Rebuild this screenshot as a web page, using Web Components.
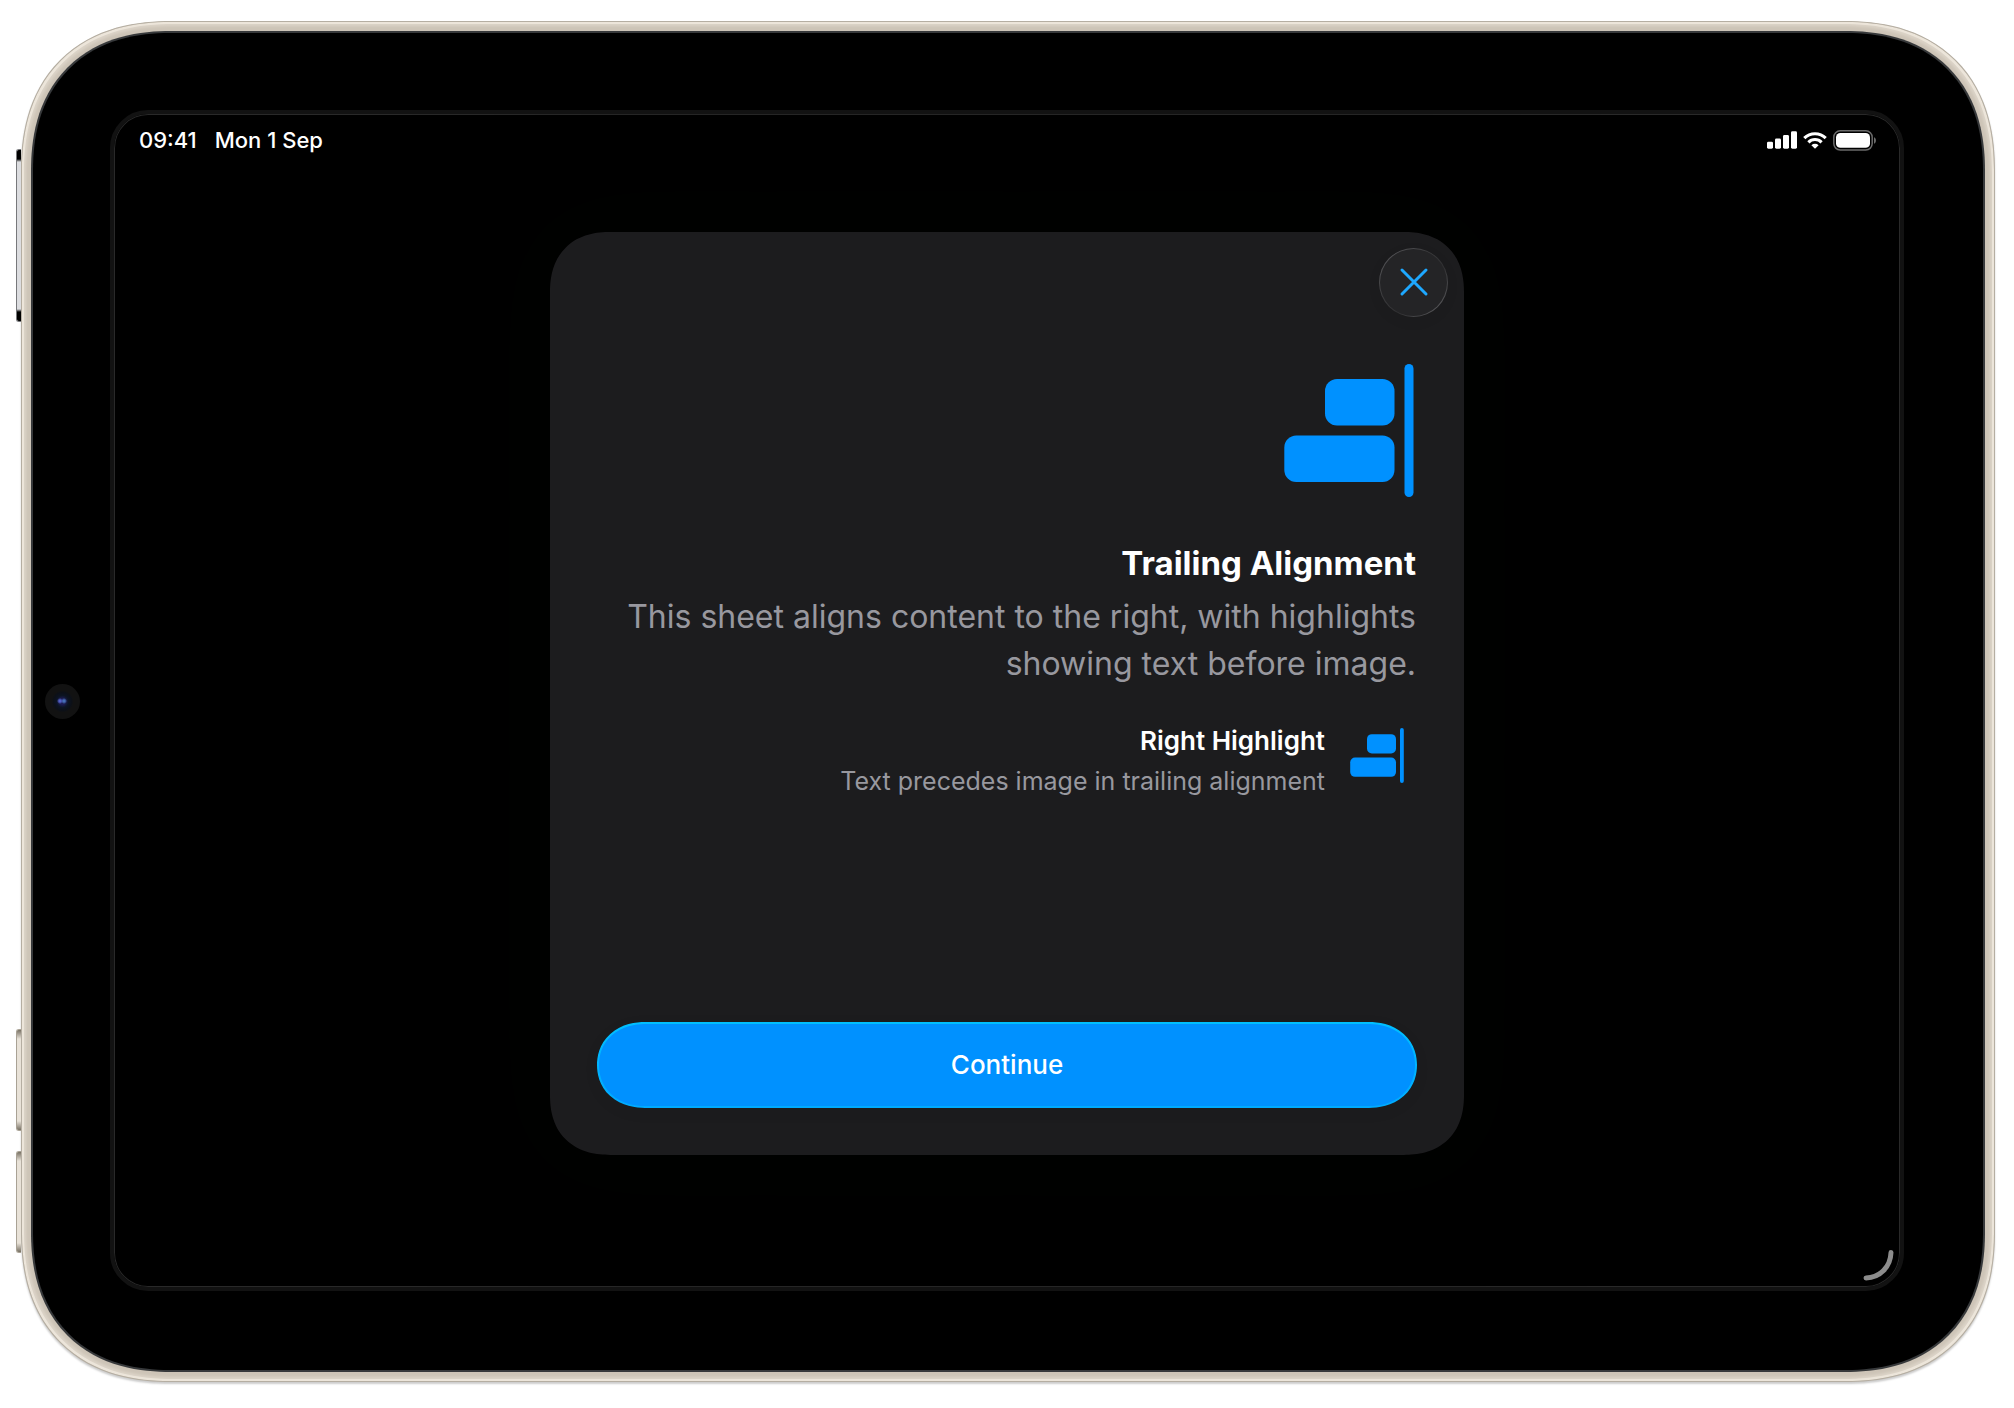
<!DOCTYPE html>
<html lang="en-GB">
<head>
<meta charset="utf-8">
<meta name="viewport" content="width=device-width, initial-scale=1">
<title>Trailing Alignment</title>
<style>
  *, *::before, *::after { box-sizing: border-box; }
  body {
    margin: 0;
    min-height: 100vh;
    display: flex;
    padding: 21px 19px 26px 21px;
    background: #fff;
    color: #fff;
    font-family: Inter, "Liberation Sans", sans-serif;
  }
</style>
</head>
<body>
<tablet-frame>
  <status-bar slot="status" time="09:41" date="Mon 1 Sep"></status-bar>
  <onboarding-sheet>
    <trailing-icon slot="image"></trailing-icon>
    <span slot="title">Trailing Alignment</span>
    <span slot="subtitle">This sheet aligns content to the right, with highlights showing text before image.</span>
    <highlight-row slot="highlights">
      <span slot="title">Right Highlight</span>
      <span slot="detail">Text precedes image in trailing alignment</span>
      <trailing-icon slot="image" small></trailing-icon>
    </highlight-row>
    <span slot="action">Continue</span>
  </onboarding-sheet>
</tablet-frame>

<script>
function define(name, html) {
  const template = document.createElement('template');
  template.innerHTML = '<style>*,*::before,*::after{box-sizing:border-box}:host{box-sizing:border-box}</style>' + html;
  customElements.define(name, class extends HTMLElement {
    connectedCallback() {
      if (this.shadowRoot) return;
      this.attachShadow({ mode: 'open' }).append(template.content.cloneNode(true));
      this.shadowRoot.querySelectorAll('[data-attr]').forEach(el => {
        el.textContent = this.getAttribute(el.dataset.attr);
      });
    }
  });
}

define('trailing-icon', `
  <style>
    :host { display: block; width: 130px; color: #0091ff; }
    :host([small]) { width: 54px; }
    svg { display: block; width: 100%; height: auto; fill: currentColor; }
    .small, :host([small]) .large { display: none; }
    :host([small]) .small { display: block; }
  </style>
  <svg class="large" viewBox="0 0 130 133" aria-hidden="true">
    <rect x="41" y="15" width="69.5" height="46.5" rx="12"/>
    <rect x="0.3" y="71.5" width="110.2" height="46.5" rx="12"/>
    <rect x="120.5" y="0" width="9" height="133" rx="4.5"/>
  </svg>
  <svg class="small" viewBox="0 0 54 55" aria-hidden="true">
    <rect x="17" y="6.2" width="29" height="19.3" rx="4.8"/>
    <rect x="0.2" y="29.5" width="45.8" height="19.3" rx="4.8"/>
    <rect x="50" y="0" width="3.8" height="55" rx="1.9"/>
  </svg>
`);

define('status-bar', `
  <style>
    :host {
      display: flex; align-items: center; justify-content: space-between;
      height: 52px; padding: 0 23px 0 25px;
      font-size: 22px; line-height: 28px; font-weight: 500;
    }
    .group { display: flex; align-items: center; }
    .clock { gap: 18px; }
    .icons { gap: 6px; }
    svg { display: block; }
  </style>
  <div class="group clock"><span data-attr="time"></span><span data-attr="date"></span></div>
  <div class="group icons">
    <svg width="30" height="18" viewBox="0 0 30 18" fill="#fff" aria-label="Signal">
      <rect x="0" y="10.7" width="6" height="7" rx="1.4"/>
      <rect x="8" y="7.6" width="6" height="10.1" rx="1.4"/>
      <rect x="16" y="4" width="6" height="13.7" rx="1.4"/>
      <rect x="24" y="0.3" width="6" height="17.4" rx="1.4"/>
    </svg>
    <svg width="24" height="18" viewBox="0 0 24 18" fill="none" stroke="#fff" stroke-width="3.1" aria-label="Wi-Fi">
      <path d="M1.3 7.2a15 15 0 0 1 21.4 0"/>
      <path d="M5.4 11.3a9.3 9.3 0 0 1 13.2 0"/>
      <path d="M8.4 14.2a5.2 5.2 0 0 1 7.2 0L12 17.8z" fill="#fff" stroke="none"/>
    </svg>
    <svg width="44" height="21" viewBox="0 0 44 21" aria-label="Battery">
      <rect x="0.8" y="0.8" width="38.4" height="19.2" rx="6.4" fill="none" stroke="#6b6b6b" stroke-width="1.5"/>
      <rect x="3" y="3" width="34" height="14.8" rx="4.4" fill="#fff"/>
      <path d="M41 7.2c2.6 1.1 2.6 5.4 0 6.5z" fill="#6b6b6b"/>
    </svg>
  </div>
`);

define('highlight-row', `
  <style>
    :host { display: flex; justify-content: flex-end; gap: 25px; padding-right: 12px; text-align: right; line-height: 32px; }
    .text { display: flex; flex-direction: column; gap: 8px; }
    h2, p { margin: 0; font-size: 26px; }
    h2 { font-weight: 600; }
    p { font-size: 25px; color: #98989f; }
    .image { padding-top: 3px; }
  </style>
  <div class="text">
    <h2><slot name="title"></slot></h2>
    <p><slot name="detail"></slot></p>
  </div>
  <div class="image"><slot name="image"></slot></div>
`);

define('onboarding-sheet', `
  <style>
    :host {
      display: flex; flex-direction: column;
      width: 100%; max-width: 914px; min-height: 923px;
      padding: 16px 0 47px;
      border-radius: 52px;
      background: #1c1c1e;
      box-shadow: 0 0 120px 40px #000200;
    }
    header { display: flex; justify-content: flex-end; padding: 0 16px; }
    button { font: inherit; color: inherit; border: 0; cursor: pointer; }
    .close {
      display: grid; place-items: center; width: 69px; height: 69px; padding: 0;
      border: 1px solid transparent; border-radius: 50%;
      background:
        linear-gradient(#242426, #242426) padding-box,
        linear-gradient(135deg, #5a5a5d 5%, #3a3a3c 40%, #303032 60%, #606063 95%) border-box;
      box-shadow: 0 4px 14px rgba(0, 0, 0, .06);
    }
    svg { display: block; }
    .content { flex: 1; display: flex; flex-direction: column; padding: 0 48px 0 47px; text-align: right; }
    .image { align-self: flex-end; padding: 47px 2px 46px 0; }
    h1, p { margin: 0; }
    h1 { font-size: 33px; font-weight: 700; line-height: 41px; }
    p { margin-top: 9px; font-size: 32px; line-height: 47px; color: #98989f; }
    .highlights { padding: 38px 0; }
    footer { padding: 0 47px; }
    .action {
      width: 100%; height: 86px; border-radius: 43px;
      border: 2px solid transparent;
      background:
        linear-gradient(#0091ff, #0091ff) padding-box,
        linear-gradient(#00bfff, #00aaff) border-box;
      font-size: 26px; font-weight: 500; line-height: 32px;
      box-shadow: 0 4px 16px rgba(0, 0, 0, .05);
    }
    @supports (corner-shape: superellipse(1.2)) {
      :host { border-radius: 60px; corner-shape: superellipse(1.2); }
      .action { border-radius: 48px / 43px; corner-shape: superellipse(1.1); }
    }
  </style>
  <header>
    <button class="close" type="button" aria-label="Close">
      <svg width="30" height="30" viewBox="0 0 30 30" fill="none" stroke="#1ea8ff" stroke-width="3" stroke-linecap="round" aria-hidden="true">
        <path d="M3 3l24 24M27 3L3 27"/>
      </svg>
    </button>
  </header>
  <div class="content">
    <div class="image"><slot name="image"></slot></div>
    <h1><slot name="title"></slot></h1>
    <p><slot name="subtitle"></slot></p>
    <div class="highlights"><slot name="highlights"></slot></div>
  </div>
  <footer><button class="action" type="button"><slot name="action"></slot></button></footer>
`);

define('tablet-frame', `
  <style>
    :host { position: relative; flex: 1; display: flex; }
    .edge {
      flex: 1; display: flex; padding: 9px;
      border-radius: 130px;
      border: 1px solid #b5aea2;
      background: #cdc4b7;
      box-shadow: inset 0 0 0 2px #ece5da, inset 0 0 3px 4px #dcd4c8, 0 2px 2px rgba(0, 0, 0, .2);
    }
    .glass {
      flex: 1; display: flex; padding: 77px 79px 79px 77px;
      border-radius: 120px;
      border: 2px solid #37393b;
      background: #000;
    }
    .screen {
      position: relative;
      flex: 1; display: flex; flex-direction: column;
      border-radius: 38px;
      border: 4px solid #121212;
      background: #000;
      box-shadow: inset 0 0 0 1px #292929;
      overflow: hidden;
    }
    @supports (corner-shape: superellipse(1.2)) {
      .edge { border-radius: 150px; corner-shape: superellipse(1.2); }
      .glass { border-radius: 140px; corner-shape: superellipse(1.2); }
    }
    main { flex: 1; display: flex; align-items: center; justify-content: center; padding: 65px 0 132px; }
    .hardware { position: absolute; left: -5px; width: 5px; border: 1px solid #a9a295; border-right: 0; border-radius: 3px 0 0 3px; background: linear-gradient(#777063, #e8e2d8 9px, #e8e2d8 calc(100% - 9px), #777063); }
    .power { top: 128px; height: 173px; border-color: #77787b; background: linear-gradient(#000 9px, #dcdde0 12px, #dcdde0 calc(100% - 12px), #000 calc(100% - 9px)); }
    .up { top: 1008px; height: 102px; }
    .down { top: 1130px; height: 102px; }
    .camera {
      position: absolute; left: 24px; top: 50%; width: 35px; height: 35px; margin-top: -18px;
      border-radius: 50%;
      background:
        radial-gradient(circle at 15px 17px, #5260c8 0 1px, transparent 3px),
        radial-gradient(circle at 19px 17px, #4670b8 0 1px, transparent 3px),
        radial-gradient(circle, #1c1b50 0 3px, #0c1422 6px, #0c1018 9px, #121212 11px);
    }
    .corner { position: absolute; right: 6px; bottom: 6px; }
  </style>
  <i class="hardware power"></i><i class="hardware up"></i><i class="hardware down"></i>
  <div class="edge"><div class="glass"><div class="screen">
    <slot name="status"></slot>
    <main><slot></slot></main>
    <svg class="corner" width="32" height="32" viewBox="0 0 32 32" fill="none" stroke="#8c8c8c" stroke-width="5" stroke-linecap="round" aria-hidden="true">
      <path d="M29 3.5C28.500 18 18 28.500 4 29"/>
    </svg>
  </div></div></div>
  <i class="camera"></i>
`);
</script>
</body>
</html>
